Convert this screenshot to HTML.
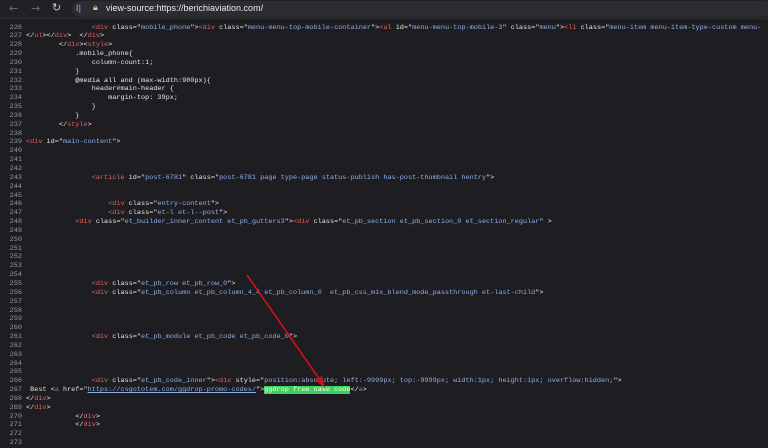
<!DOCTYPE html>
<html><head><meta charset="utf-8"><style>
html,body{margin:0;padding:0;width:768px;height:448px;overflow:hidden;background:#1d1d22}
.bar{position:absolute;left:0;top:0;width:768px;height:18px;background:#202124;border-bottom:1px solid #2e2f33}
.addr{position:absolute;left:72px;top:1px;width:700px;height:16px;background:#2b2c30;border-radius:8px}
.url{position:absolute;left:106px;top:3px;font:9px "Liberation Sans",sans-serif;color:#e8eaed}
.code{position:absolute;left:0;top:23.5px;font:6.85px/8.85px "Liberation Mono",monospace;color:#e6e6e6;white-space:pre}
.n{display:inline-block;width:22px;text-align:right;color:#9a9a9a;margin-right:4px}
.t{color:#e8605a}.v{color:#8fb0e6}.u{color:#8fb0e6;text-decoration:underline}
.g{background:#3fcf5c;color:#fff}
</style></head><body>
<div class="bar">
<span style="position:absolute;left:9px;top:2px;color:#6d6f73;font:11px 'DejaVu Sans'">←</span>
<span style="position:absolute;left:31px;top:2px;color:#6d6f73;font:11px 'DejaVu Sans'">→</span>
<span style="position:absolute;left:52px;top:1px;color:#c8c8c8;font:11px 'DejaVu Sans'">↻</span>
<div class="addr"></div>
<span style="position:absolute;left:76px;top:3px;color:#9b6bd8;font:bold 9px 'Liberation Sans'">I|</span>
<span style="position:absolute;left:93px;top:3px;color:#ccc;font:9px 'DejaVu Sans'">🔒︎</span>
<span class="url">view-source:https://berichiaviation.com/</span>
</div>
<div class="code"><span class="n">226</span>                <span class="t">&lt;div</span> class="<span class="v">mobile_phone</span>"&gt;<span class="t">&lt;div</span> class="<span class="v">menu-menu-top-mobile-container</span>"&gt;<span class="t">&lt;ul</span> id="<span class="v">menu-menu-top-mobile-3</span>" class="<span class="v">menu</span>"&gt;<span class="t">&lt;li</span> class="<span class="v">menu-item menu-item-type-custom menu-</span>
<span class="n">227</span>&lt;/<span class="t">ul</span>&gt;&lt;/<span class="t">div</span>&gt;  &lt;/<span class="t">div</span>&gt;
<span class="n">228</span>        &lt;/<span class="t">div</span>&gt;&lt;<span class="t">style</span>&gt;
<span class="n">229</span>            .mobile_phone{
<span class="n">230</span>                column-count:1;
<span class="n">231</span>            }
<span class="n">232</span>            @media all and (max-width:980px){
<span class="n">233</span>                header#main-header {
<span class="n">234</span>                    margin-top: 39px;
<span class="n">235</span>                }
<span class="n">236</span>            }
<span class="n">237</span>        &lt;/<span class="t">style</span>&gt;
<span class="n">238</span>
<span class="n">239</span><span class="t">&lt;div</span> id="<span class="v">main-content</span>"&gt;
<span class="n">240</span>
<span class="n">241</span>
<span class="n">242</span>
<span class="n">243</span>                <span class="t">&lt;article</span> id="<span class="v">post-6781</span>" class="<span class="v">post-6781 page type-page status-publish has-post-thumbnail hentry</span>"&gt;
<span class="n">244</span>
<span class="n">245</span>
<span class="n">246</span>                    <span class="t">&lt;div</span> class="<span class="v">entry-content</span>"&gt;
<span class="n">247</span>                    <span class="t">&lt;div</span> class="<span class="v">et-l et-l--post</span>"&gt;
<span class="n">248</span>            <span class="t">&lt;div</span> class="<span class="v">et_builder_inner_content et_pb_gutters3</span>"&gt;<span class="t">&lt;div</span> class="<span class="v">et_pb_section et_pb_section_0 et_section_regular</span>" &gt;
<span class="n">249</span>
<span class="n">250</span>
<span class="n">251</span>
<span class="n">252</span>
<span class="n">253</span>
<span class="n">254</span>
<span class="n">255</span>                <span class="t">&lt;div</span> class="<span class="v">et_pb_row et_pb_row_0</span>"&gt;
<span class="n">256</span>                <span class="t">&lt;div</span> class="<span class="v">et_pb_column et_pb_column_4_4 et_pb_column_0  et_pb_css_mix_blend_mode_passthrough et-last-child</span>"&gt;
<span class="n">257</span>
<span class="n">258</span>
<span class="n">259</span>
<span class="n">260</span>
<span class="n">261</span>                <span class="t">&lt;div</span> class="<span class="v">et_pb_module et_pb_code et_pb_code_0</span>"&gt;
<span class="n">262</span>
<span class="n">263</span>
<span class="n">264</span>
<span class="n">265</span>
<span class="n">266</span>                <span class="t">&lt;div</span> class="<span class="v">et_pb_code_inner</span>"&gt;<span class="t">&lt;div</span> style="<span class="v">position:absolute; left:-9999px; top:-9999px; width:1px; height:1px; overflow:hidden;</span>"&gt;
<span class="n">267</span> Best &lt;<span class="t">a</span> href="<span class="u">https://csgototem.com/ggdrop-promo-codes/</span>"&gt;<span class="g">ggdrop free case code</span>&lt;/<span class="t">a</span>&gt;
<span class="n">268</span>&lt;/<span class="t">div</span>&gt;
<span class="n">269</span>&lt;/<span class="t">div</span>&gt;
<span class="n">270</span>            &lt;/<span class="t">div</span>&gt;
<span class="n">271</span>            &lt;/<span class="t">div</span>&gt;
<span class="n">272</span>
<span class="n">273</span>
</div>
<svg style="position:absolute;left:0;top:0" width="768" height="448"><line x1="247" y1="275" x2="320" y2="380" stroke="#d0101a" stroke-width="1.6"/><polygon points="325,388 315,380 322,376" fill="#d0101a"/></svg>
</body></html>
